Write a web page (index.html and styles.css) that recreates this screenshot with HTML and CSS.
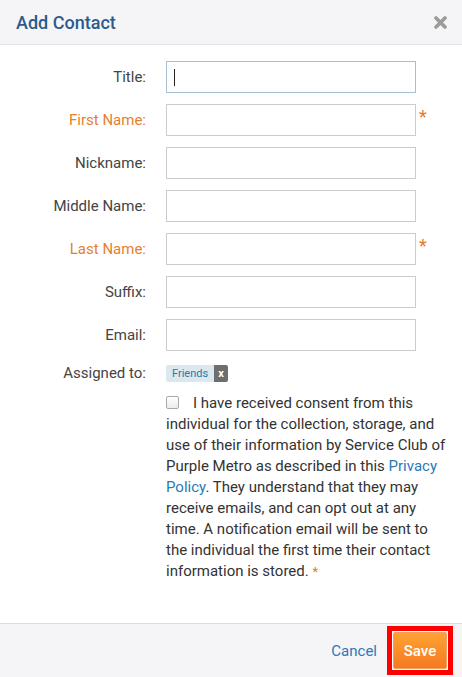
FILE: index.html
```html
<!DOCTYPE html>
<html>
<head>
<meta charset="utf-8">
<link rel="stylesheet" href="styles.css">
</head>
<body>
<div class="modal">
  <header class="modal-header">
    <h1 class="modal-title">Add Contact</h1>
    <svg class="close-btn" width="13" height="13" viewBox="0 0 13 13"><path d="M2 2 L11 11 M11 2 L2 11" stroke="#9b9b9b" stroke-width="3.6" stroke-linecap="round"/></svg>
  </header>
  <main class="modal-body">
    <div class="form-grid">
      <label class="label">Title:</label>
      <div class="field"><div class="input-wrap"><input class="input input-focus" type="text"><span class="caret"></span></div></div>

      <label class="label required">First Name:</label>
      <div class="field"><input class="input" type="text"><span class="star">*</span></div>

      <label class="label">Nickname:</label>
      <div class="field"><input class="input" type="text"></div>

      <label class="label">Middle Name:</label>
      <div class="field"><input class="input" type="text"></div>

      <label class="label required">Last Name:</label>
      <div class="field"><input class="input" type="text"><span class="star">*</span></div>

      <label class="label">Suffix:</label>
      <div class="field"><input class="input" type="text"></div>

      <label class="label">Email:</label>
      <div class="field"><input class="input" type="text"></div>

      <label class="label label-assigned">Assigned to:</label>
      <div class="field field-tags">
        <span class="tag"><span class="tag-name">Friends</span><span class="tag-x">x</span></span>
      </div>

      <div class="spacer"></div>
      <div class="consent">
        <p class="consent-text"><span class="checkbox"></span>I have received consent from this individual for the collection, storage, and use of their information by Service Club of Purple Metro as described in this <a class="link">Privacy Policy</a>. They understand that they may receive emails, and can opt out at any time. A notification email will be sent to the individual the first time their contact information is stored. <span class="star-small">*</span></p>
      </div>
    </div>
  </main>
  <footer class="modal-footer">
    <a class="cancel">Cancel</a>
    <span class="highlight"><button class="save">Save</button></span>
  </footer>
</div>
</body>
</html>
```
FILE: styles.css
```css
html, body {
  margin: 0;
  padding: 0;
  background: #ffffff;
}
body {
  font-family: Roboto, "Liberation Sans", Arial, sans-serif;
  color: #333;
}
.modal {
  width: 462px;
  height: 677px;
  display: flex;
  flex-direction: column;
  background: #fff;
}
.modal-header {
  height: 44px;
  background: #f5f5f7;
  border-bottom: 1px solid #e2e2e6;
  display: flex;
  align-items: center;
  justify-content: space-between;
  padding: 0 15px 0 16px;
}
.modal-title {
  margin: 0;
  font-size: 18px;
  font-weight: 500;
  color: #2a5b8d;
  letter-spacing: 0;
}
.close-btn {
  display: block;
  margin-top: 0;
}
.modal-body {
  flex: 1;
  padding: 16px 0 0 0;
}
.form-grid {
  display: grid;
  grid-template-columns: 146px 1fr;
  column-gap: 20px;
  row-gap: 11px;
  align-items: center;
}
.label {
  text-align: right;
  font-size: 15px;
  color: #444;
}
.label.required {
  color: #e57f2f;
}
.field {
  display: flex;
  align-items: flex-start;
}
.input-wrap {
  position: relative;
  display: flex;
}
.input {
  width: 250px;
  height: 32px;
  box-sizing: border-box;
  border: 1px solid #cccccc;
  background: #fff;
  padding: 0 6px;
  margin: 0;
  font-family: inherit;
  font-size: 14px;
  outline: none;
}
.input-focus {
  border-color: #a7bfd2;
}
.caret {
  position: absolute;
  left: 8px;
  top: 8px;
  width: 1px;
  height: 17px;
  background: #222;
}
.star {
  color: #e8782a;
  font-size: 18px;
  line-height: 1;
  margin-left: 3px;
  margin-top: 4px;
}
.label-assigned {
  align-self: center;
}
.field-tags {
  margin-top: 1px;
  height: 20px;
  align-items: center;
}
.tag {
  display: inline-flex;
  height: 17px;
  border-radius: 2px;
  overflow: hidden;
  font-size: 11px;
  line-height: 17px;
}
.tag-name {
  background: #dbe9ee;
  color: #2a78ad;
  padding: 0 6px;
}
.tag-x {
  background: #6e6e6e;
  color: #fff;
  font-weight: bold;
  padding: 0 4px;
  font-size: 11px;
}
.spacer {
  align-self: stretch;
}
.consent {
  padding-right: 14px;
  margin-top: -1px;
}
.consent-text {
  margin: 0;
  font-size: 15px;
  line-height: 21px;
  color: #333;
}
.checkbox {
  display: inline-block;
  width: 11px;
  height: 11px;
  border: 1px solid #a9a9a9;
  border-radius: 2px;
  background: linear-gradient(#ffffff, #ececec);
  margin-right: 14px;
  vertical-align: -1px;
}
.link {
  color: #2a7ab4;
}
.star-small {
  color: #e8782a;
  font-size: 13px;
}
.modal-footer {
  height: 53px;
  border-top: 1px solid #dcdcdf;
  background: #f5f5f7;
  display: flex;
  align-items: center;
  justify-content: flex-end;
  padding-right: 9px;
}
.cancel {
  color: #2a7ab4;
  font-size: 15px;
  margin-right: 10px;
}
.highlight {
  display: inline-flex;
  border: 5px solid #ff0000;
  padding: 1px;
  background: #fff;
}
.save {
  width: 54px;
  height: 37px;
  border: 1px solid #f0a060;
  border-radius: 2px;
  background: linear-gradient(#ffa233, #f47a22);
  color: #fff;
  font-family: inherit;
  font-size: 15px;
  font-weight: 500;
  padding: 0;
}
```
